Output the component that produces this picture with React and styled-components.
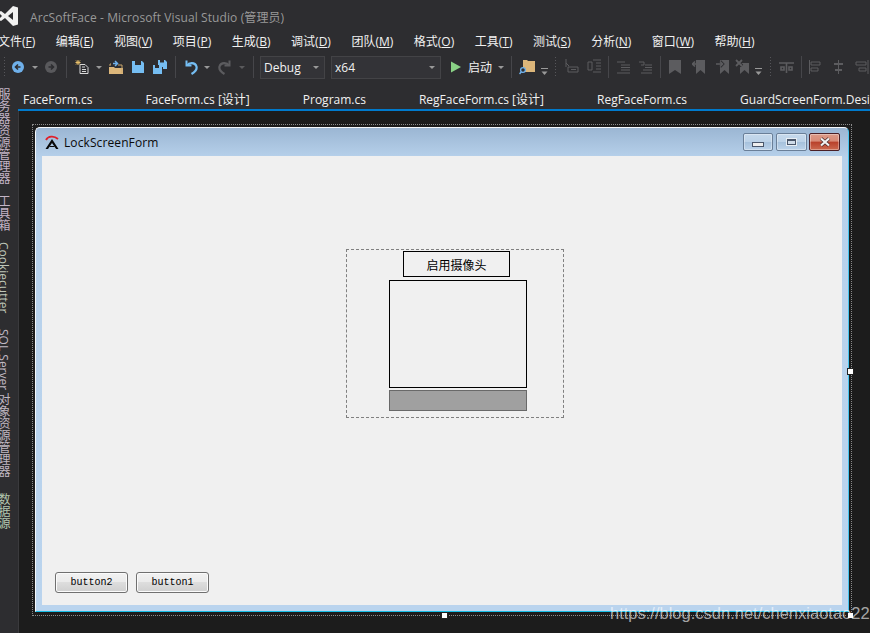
import React from "react";
import styled, { createGlobalStyle } from "styled-components";

const Global = createGlobalStyle`
  html, body { margin: 0; padding: 0; background: #2d2d30; }
  #root { width: 870px; height: 633px; overflow: hidden; }
`;
const CJK = `"Open Sans", "Noto Sans CJK SC", sans-serif`;

const Page = styled.div`
  position: relative; width: 870px; height: 633px; overflow: hidden;
  display: flex; flex-direction: column; background: #2d2d30;
  font-family: ${CJK}; font-size: 12px; color: #f1f1f1;
`;
const TitleBar = styled.div`
  height: 32px; display: flex; align-items: center; flex: none; padding-top: 2px; box-sizing: border-box;
`;
const Logo = styled.svg`width: 18px; height: 20px; flex: none; margin-top: -2px;`;
const AppTitle = styled.div`margin-left: 12px; color: #999; font-size: 12px; white-space: nowrap; letter-spacing: .1px;`;
const MenuBar = styled.div`
  height: 20px; flex: none; display: flex; align-items: center; gap: 20.5px; margin-left: -2px; white-space: nowrap;
`;
const MenuItem = styled.span`color: #f1f1f1; font-size: 12px; line-height: 20px; & u { text-underline-offset: 1px; }`;
const Toolbar = styled.div`height: 30px; flex: none; display: flex; align-items: center; white-space: nowrap;`;
const Glyph = styled.svg`flex: none; margin-left: ${p => p.$ml}px; width: ${p => p.$w}px; height: ${p => p.$h || 16}px;`;
const Sep = styled.i`flex: none; width: 1px; height: 22px; background: #46464a; margin-left: ${p => p.$ml}px;`;
const Grip = styled.i`flex: none; width: 3px; height: 22px; margin-left: ${p => p.$ml}px;
  background: radial-gradient(circle, #56565a 0.7px, transparent 0.8px) 0 0 / 3px 3px;`;
const Combo = styled.div`
  flex: none; box-sizing: border-box; width: ${p => p.$w}px; height: 23px; margin-left: ${p => p.$ml}px;
  background: #333337; border: 1px solid #434346; color: #f1f1f1; font-size: 12px;
  display: flex; align-items: center; justify-content: space-between; padding: 0 5px 0 3px;
`;
const Caret = styled.i`flex: none; width: 0; height: 0; margin-left: ${p => p.$ml || 0}px;
  border-left: 3.5px solid transparent; border-right: 3.5px solid transparent;
  border-top: 3.5px solid ${p => p.$dim ? "#5a5a5c" : "#999"};`;
const RunLabel = styled.span`flex: none; margin-left: ${p => p.$ml}px; font-size: 12px; color: #f1f1f1; width: 24px;`;

const Workspace = styled.div`flex: 1; min-height: 0; display: flex;`;
const SideRail = styled.div`
  width: 18px; flex: none; overflow: hidden; display: flex; flex-direction: column; gap: 10px; padding-top: 6px; box-sizing: border-box;
`;
const SideLabel = styled.div`
  writing-mode: vertical-rl; margin-left: -3px; width: 12px; line-height: 12px; height: ${p => p.$h}px;
  font-size: 12px; white-space: nowrap; color: ${p => p.$c}; flex: none;
`;
const EditorColumn = styled.div`flex: 1; min-width: 0; display: flex; flex-direction: column;`;
const TabStrip = styled.div`
  height: 29px; flex: none; box-sizing: border-box; border-bottom: 2px solid #007acc;
  display: flex; align-items: flex-end; gap: 53px; padding: 0 0 1px 5px; overflow: hidden; white-space: nowrap;
`;
const Tab = styled.span`font-size: 12px; line-height: 17px; color: #f1f1f1; flex: none;`;
const Designer = styled.div`
  flex: 1; background: #1c1c1c; border-left: 1px solid #3a3a3d; padding: 13px 0 0 13px; min-height: 0;
`;
const Selection = styled.div`
  position: relative; box-sizing: border-box; width: 820px; height: 492px; padding: 2px;
  border: 1px dotted #8a8a8a;
`;
const Handle = styled.i`
  position: absolute; width: 5px; height: 5px; background: #fff; border: 1px solid #222; box-sizing: content-box;
  right: ${p => p.$right}; bottom: ${p => p.$bottom}; left: ${p => p.$left}; top: ${p => p.$top};
`;
const FormFrame = styled.div`
  box-sizing: border-box; width: 814px; height: 485px; display: flex; flex-direction: column;
  border-radius: 5px 5px 0 0;
  background: linear-gradient(180deg, #9bb6d3 0, #b7d1eb 30px, #bad4ee 100%);
  border-top: 1px solid #f4f8fc; border-left: 1px solid #f4f8fc;
  border-right: 1px solid #46c4ee; border-bottom: 1px solid #18bfe6;
`;
const FormTitle = styled.div`
  height: 28px; flex: none; display: flex; align-items: center; padding: 0 8px 0 8px;
`;
const FormIcon = styled.svg`width: 17px; height: 17px; flex: none;`;
const FormName = styled.div`margin-left: 3px; color: #0a0a0a; font-size: 12px; flex: 1; letter-spacing: .1px;`;
const CapBtn = styled.div`
  box-sizing: border-box; width: ${p => p.$w}px; height: 18px; margin-left: ${p => p.$ml}px; border-radius: 2px;
  display: flex; align-items: center; justify-content: center; flex: none;
  border: 1px solid ${p => p.$close ? "#4a1f25" : "#6a7f98"};
  background: ${p => p.$close
    ? "linear-gradient(180deg,#dc9a88 0,#d88a76 45%,#b8402a 50%,#cc6a50 100%)"
    : "linear-gradient(180deg,#c6d9ec 0,#bcd2e8 48%,#a6c1dc 52%,#bcd3ea 100%)"};
  box-shadow: inset 0 0 0 1px rgba(255,255,255,.35);
`;
const MinGlyph = styled.i`width: 10px; height: 3px; background: #eee; border: 1px solid #4a566a; margin-top: 5px;`;
const MaxGlyph = styled.i`width: 7px; height: 3px; background: #cfdbe8; border: 1px solid #4a566a; border-top-width: 2px; outline: 1px solid #e8eef4;`;
const Client = styled.div`
  flex: 1; min-height: 0; margin: 0 6px 6px 6px; background: #f0f0f0; display: flex; flex-direction: column;
  padding: 93px 0 12px 0;
`;
const CameraPanel = styled.div`
  box-sizing: border-box; width: 218px; height: 169px; margin-left: 304px; flex: none; border: 1px dashed #808080;
  display: flex; flex-direction: column; padding: 1px 0 0 42px;
`;
const CameraButton = styled.div`
  box-sizing: border-box; width: 107px; height: 26px; margin-left: 14px; border: 1px solid #000; color: #000;
  display: flex; align-items: center; justify-content: center; font-family: "Noto Sans CJK SC", sans-serif; font-size: 12px;
`;
const Picture = styled.div`box-sizing: border-box; width: 138px; height: 108px; margin-top: 3px; border: 1px solid #000;`;
const ProgressBar = styled.div`box-sizing: border-box; width: 138px; height: 21px; margin-top: 2px; background: #a0a0a0; border: 1px solid #696969;`;
const BottomButtons = styled.div`margin-top: auto; display: flex; gap: 8px; padding-left: 13px;`;
const WinButton = styled.div`
  box-sizing: border-box; width: 73px; height: 21px; border: 1px solid #707070; border-radius: 3px;
  background: linear-gradient(180deg, #f2f2f2 0, #ebebeb 45%, #dddddd 50%, #cfcfcf 100%);
  box-shadow: inset 0 0 0 1px #fbfbfb;
  display: flex; align-items: center; justify-content: center;
  font-family: "Liberation Mono", monospace; font-size: 10px; color: #000;
`;
const Watermark = styled.div`
  position: absolute; left: 610px; top: 603px; font-family: "Liberation Sans", Arial, sans-serif; font-size: 16.5px; line-height: 20px;
  color: rgba(255,255,255,.62); white-space: nowrap;
`;

const U = ({ children }) => <u>{children}</u>;
const menus = [["文件","F"],["编辑","E"],["视图","V"],["项目","P"],["生成","B"],["调试","D"],["团队","M"],["格式","O"],["工具","T"],["测试","S"],["分析","N"],["窗口","W"],["帮助","H"]];
const tabs = ["FaceForm.cs","FaceForm.cs [设计]","Program.cs","RegFaceForm.cs [设计]","RegFaceForm.cs","GuardScreenForm.Designer.cs"];
const rail = [
  ["服务器资源管理器", 97, "#c3b4c6"], ["工具箱", 37, "#c3b4c6"], ["Cookiecutter", 77, "#bfc6b8"],
  ["SQL Server 对象资源管理器", 154, "#c0b8c2"], ["数据源", 37, "#b4c8b0"],
];
const D = "#5c5c5f";

export default function App() {
  return (
    <Page>
      <Global />
      <TitleBar>
        <Logo viewBox="0 0 18 20">
          <path fill="#f1f1f1" d="M18 1.5 13 0 5 8 1 5 -2 6.5V13.5L1 15l4-3 8 8 5-1.5ZM13 6v8L8 10ZM0 8l2 2-2 2Z" fillRule="evenodd" />
        </Logo>
        <AppTitle>ArcSoftFace - Microsoft Visual Studio (管理员)</AppTitle>
      </TitleBar>
      <MenuBar>
        {menus.map(([n, k]) => <MenuItem key={k}>{n}(<U>{k}</U>)</MenuItem>)}
      </MenuBar>
      <Toolbar>
        <Grip $ml={3} />
        <Glyph $ml={6} $w={12} viewBox="0 0 12 16"><circle cx="6" cy="8" r="6" fill="#6fb0ea"/><path d="M8.5 8H4M6 5.5 3.5 8 6 10.5" stroke="#2d2d30" strokeWidth="1.6" fill="none"/></Glyph>
        <Caret $ml={8} />
        <Glyph $ml={7} $w={12} viewBox="0 0 12 16"><circle cx="6" cy="8" r="6" fill="#59595c"/><path d="M3.5 8H8M6 5.5 8.5 8 6 10.5" stroke="#2d2d30" strokeWidth="1.6" fill="none"/></Glyph>
        <Sep $ml={9} />
        <Glyph $ml={8} $w={14} viewBox="0 0 14 16"><path d="M5 5.5h5l3 3v6H5Z" fill="#2d2d30" stroke="#d8d8d8"/><path d="M7 8h3M7 10.5h4M7 12.5h4" stroke="#d8d8d8"/><path d="M3 1v5M.5 3.5h5M1 1.5l4 4M5 1.5l-4 4" stroke="#e8c06a" strokeWidth="1"/></Glyph>
        <Caret $ml={7} />
        <Glyph $ml={7} $w={14} viewBox="0 0 14 16"><path d="M0 8h5l1 1h8v6H0Z" fill="#dcb67a"/><path d="M1 7V5h1M13 14V6H9" stroke="#c9a66c" fill="none"/><path d="M4 4.5h4M6 2 8.5 4.5 6 7" stroke="#6fb0ea" strokeWidth="1.5" fill="none"/></Glyph>
        <Glyph $ml={9} $w={12} viewBox="0 0 12 16"><path d="M0 2h10l2 2v10H0Z" fill="#75bdf2"/><path d="M3 2h6v4H3Z" fill="#2d2d30"/><path d="M3 9h6v5H3Z" fill="#75bdf2"/></Glyph>
        <Glyph $ml={9} $w={14} viewBox="0 0 14 16"><path d="M5 1h7l2 2v7H10V8H5Z" fill="#75bdf2"/><path d="M7 1h4v2.5H7Z" fill="#2d2d30"/><path d="M0 6h7l2 2v7H0Z" fill="#75bdf2"/><path d="M2 6h4v3H2Z" fill="#2d2d30"/></Glyph>
        <Sep $ml={8} />
        <Glyph $ml={8} $w={14} viewBox="0 0 14 16"><path d="M2.5 1.5v5h5" stroke="#75bdf2" strokeWidth="2" fill="none"/><path d="M3 6.5C5 3.5 11 3 12.5 7.5c.7 3-1.5 5.5-5 7.5" stroke="#75bdf2" strokeWidth="2.2" fill="none"/></Glyph>
        <Caret $ml={6} />
        <Glyph $ml={8} $w={14} viewBox="0 0 14 16"><path d="M11.5 1.5v5h-5" stroke={D} strokeWidth="2" fill="none"/><path d="M11 6.5C9 3.5 3 3 1.5 7.5c-.7 3 1.5 5.5 5 7.5" stroke={D} strokeWidth="2.2" fill="none"/></Glyph>
        <Caret $ml={7} $dim />
        <Sep $ml={8} />
        <Combo $ml={6} $w={65}>Debug<Caret /></Combo>
        <Combo $ml={6} $w={110}>x64<Caret /></Combo>
        <Glyph $ml={10} $w={10} viewBox="0 0 10 16"><path d="M0 2.5 10 8 0 13.5Z" fill="#89d185"/></Glyph>
        <RunLabel $ml={7}>启动</RunLabel>
        <Caret $ml={6} />
        <Sep $ml={7} />
        <Glyph $ml={7} $w={16} viewBox="0 0 16 16"><path d="M4 1h4l1 1h7v11H4Z" fill="#dcb67a"/><circle cx="4" cy="11" r="2.4" fill="#2d2d30" stroke="#6fb0ea" strokeWidth="1.3"/><path d="M2.3 12.8.5 15" stroke="#6fb0ea" strokeWidth="1.5"/></Glyph>
        <Glyph $ml={6} $w={7} $h={22} viewBox="0 0 7 22"><path d="M0 12.5h7" stroke="#999"/><path d="M.5 15.5h6L3.5 19Z" fill="#999"/></Glyph>
        <Grip $ml={6} />
        <Glyph $ml={8} $w={14} viewBox="0 0 14 16"><path d="M1 0v8M1 4l3 3" stroke={D} fill="none"/><path d="M3 8h10v5H3Z M6 10.5h5" stroke={D} fill="none"/></Glyph>
        <Glyph $ml={8} $w={14} viewBox="0 0 14 16"><path d="M6 1h8M9 4h5M9 7h5M9 10h5M6 13h8" stroke={D}/><path d="M5 3v8L1 11V3Z" stroke={D} fill="none"/></Glyph>
        <Sep $ml={7} />
        <Glyph $ml={8} $w={13} viewBox="0 0 13 16"><path d="M0 3h8M4 6h9M4 8.5h9M4 11h9M0 14h13" stroke={D}/></Glyph>
        <Glyph $ml={9} $w={13} viewBox="0 0 13 16"><path d="M0 3h5M5 3v3H2M6 6h7M6 8.5h7M4 11h9M2 14h11" stroke={D} fill="none"/></Glyph>
        <Sep $ml={8} />
        <Glyph $ml={8} $w={12} viewBox="0 0 12 16"><path d="M0 1h12v14L6 11 0 15Z" fill={D}/></Glyph>
        <Glyph $ml={11} $w={13} viewBox="0 0 13 16"><path d="M4 1h9v14L8.5 11 4 15Z" fill={D}/><path d="M6 5H1M3 2.5.5 5 3 7.5" stroke={D} strokeWidth="1.6" fill="#2d2d30"/></Glyph>
        <Glyph $ml={11} $w={13} viewBox="0 0 13 16"><path d="M4 1h9v14L8.5 11 4 15Z" fill={D}/><path d="M0 5h6M4 2.5 6.5 5 4 7.5" stroke="#2d2d30" strokeWidth="3.2" fill="none"/><path d="M0 5h6M4 2.5 6.5 5 4 7.5" stroke={D} strokeWidth="1.6" fill="none"/></Glyph>
        <Glyph $ml={6} $w={14} viewBox="0 0 14 16"><path d="M5 4h9v11L9.5 11 5 15Z" fill={D}/><path d="M1 1l6 6M7 1 1 7" stroke="#2d2d30" strokeWidth="3.5"/><path d="M1 1l6 6M7 1 1 7" stroke={D} strokeWidth="1.8"/></Glyph>
        <Glyph $ml={6} $w={7} $h={22} viewBox="0 0 7 22"><path d="M0 12.5h7" stroke="#999"/><path d="M.5 15.5h6L3.5 19Z" fill="#999"/></Glyph>
        <Grip $ml={7} />
        <Glyph $ml={7} $w={15} viewBox="0 0 15 16"><path d="M0 4h15M7.5 4v10M2 8h3v3H2ZM10 8h3v3h-3Z" stroke={D} strokeWidth="1.6" fill="none"/></Glyph>
        <Sep $ml={7} />
        <Glyph $ml={7} $w={13} viewBox="0 0 13 16"><path d="M.5 1v14" stroke={D}/><path d="M2 3h9v3H2ZM2 9h7v3H2Z" fill="none" stroke={D}/></Glyph>
        <Glyph $ml={10} $w={13} viewBox="0 0 13 16"><path d="M6.5 1v14" stroke={D}/><path d="M2 4h9v2H2ZM3 10h7v2H3Z" fill={D}/></Glyph>
        <Glyph $ml={9} $w={15} viewBox="0 0 15 16"><path d="M14 1v14" stroke={D}/><path d="M2 3h10v3H2ZM5 9h7v3H5Z" fill="none" stroke={D}/></Glyph>
      </Toolbar>
      <Workspace>
        <SideRail>
          {rail.map(([t, h, c]) => <SideLabel key={t} $h={h} $c={c}>{t}</SideLabel>)}
        </SideRail>
        <EditorColumn>
          <TabStrip>{tabs.map(t => <Tab key={t}>{t}</Tab>)}</TabStrip>
          <Designer>
            <Selection>
              <FormFrame>
                <FormTitle>
                  <FormIcon viewBox="0 0 17 17">
                    <path d="M2 6C4 2 10 1.5 14 5" stroke="#e0202a" strokeWidth="1.8" fill="none"/>
                    <path d="M1.5 15 8 5l6.5 10h-2.4L8 9l-4 6Z" fill="#0a0a0a"/><path d="M5.5 12.5h5" stroke="#0a0a0a"/>
                  </FormIcon>
                  <FormName>LockScreenForm</FormName>
                  <CapBtn $w={30}><MinGlyph /></CapBtn>
                  <CapBtn $w={31} $ml={3}><MaxGlyph /></CapBtn>
                  <CapBtn $w={31} $ml={2} $close>
                    <svg width="12" height="10" viewBox="0 0 12 10"><path d="M2 1.5 10 8.5M10 1.5 2 8.5" stroke="#4a2a2a" strokeWidth="3.6"/><path d="M2 1.5 10 8.5M10 1.5 2 8.5" stroke="#f2f2f2" strokeWidth="2.2"/></svg>
                  </CapBtn>
                </FormTitle>
                <Client>
                  <CameraPanel>
                    <CameraButton>启用摄像头</CameraButton>
                    <Picture />
                    <ProgressBar />
                  </CameraPanel>
                  <BottomButtons>
                    <WinButton>button2</WinButton>
                    <WinButton>button1</WinButton>
                  </BottomButtons>
                </Client>
              </FormFrame>
              <Handle $right="-3px" $top="243px" />
              <Handle $left="408px" $bottom="-4px" />
              <Handle $right="-3px" $bottom="-4px" />
            </Selection>
          </Designer>
        </EditorColumn>
      </Workspace>
      <Watermark>https://blog.csdn.net/chenxiaotao22</Watermark>
    </Page>
  );
}
